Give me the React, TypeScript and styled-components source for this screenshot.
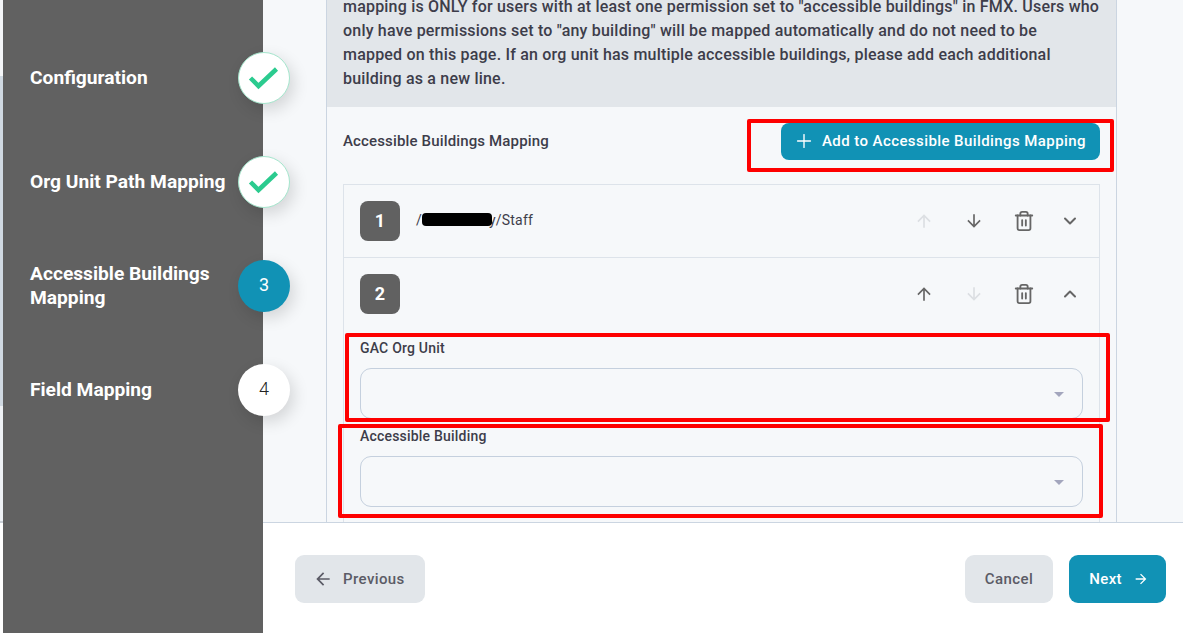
import React, { FC } from 'react';
import styled, { createGlobalStyle } from 'styled-components';
import { ChevronDown, ChevronUp, Plus, Trash2 } from 'lucide-react';

const GlobalStyle = createGlobalStyle`
  html, body {
    margin: 0;
    height: 100%;
    overflow: hidden;
    background: #fff;
    font-family: Roboto, 'Liberation Sans', sans-serif;
  }
  * {
    box-sizing: border-box;
  }
`;

const steps = [
  { label: 'Configuration', status: 'done' },
  { label: 'Org Unit Path Mapping', status: 'done' },
  { label: 'Accessible Buildings Mapping', status: 'active', num: 3 },
  { label: 'Field Mapping', status: 'todo', num: 4 },
];

const arrowPaths = {
  up: 'M4 12l1.41 1.41L11 7.83V20h2V7.83l5.58 5.59L20 12l-8-8-8 8z',
  down: 'M20 12l-1.41-1.41L13 16.17V4h-2v12.17l-5.58-5.59L4 12l8 8 8-8z',
  left: 'M20 11H7.83l5.59-5.59L12 4l-8 8 8 8 1.41-1.41L7.83 13H20v-2z',
  right: 'M12 4l-1.41 1.41L16.17 11H4v2h12.17l-5.58 5.59L12 20l8-8-8-8z',
};

const Arrow: FC<{ dir: keyof typeof arrowPaths; size?: number }> = ({ dir, size = 20 }) => (
  <svg width={size} height={size} viewBox="0 0 24 24" fill="currentColor">
    <path d={arrowPaths[dir]} />
  </svg>
);

const DoneCheck: FC = () => (
  <svg width="32" height="26" viewBox="0 0 32 26" fill="none">
    <polyline points="2.5,13 10.5,21 28.5,4" stroke="#2bcb8f" strokeWidth="4.5" />
  </svg>
);

const App: FC = () => (
  <Page>
    <GlobalStyle />
    <Strip>
      <StripBand $h={76} $color="#f4f6f8" />
      <StripBand $h={330} $color="#d0d9e2" />
      <StripBand $h={115} $color="#eef1f5" />
      <StripBand $h={2} $color="#c9cfd6" />
    </Strip>
    <Sidebar>
      {steps.map((s) => (
        <Step key={s.label}>
          <StepLabel>{s.label}</StepLabel>
          <StepCircle $status={s.status}>{s.status === 'done' ? <DoneCheck /> : s.num}</StepCircle>
        </Step>
      ))}
    </Sidebar>
    <Main>
      <Scroll>
        <Panel>
          <Notice>
            mapping is ONLY for users with at least one permission set to "accessible buildings" in FMX. Users who
            <br />
            only have permissions set to "any building" will be mapped automatically and do not need to be
            <br />
            mapped on this page. If an org unit has multiple accessible buildings, please add each additional
            <br />
            building as a new line.
          </Notice>
          <Body>
            <BodyHeader>
              <Title>Accessible Buildings Mapping</Title>
              <AddButton>
                <Plus size={22} strokeWidth={1.5} />
                Add to Accessible Buildings Mapping
              </AddButton>
            </BodyHeader>
            <Card>
              <Row>
                <Badge>1</Badge>
                <RowName>
                  /<Redacted />y/Staff
                </RowName>
                <RowActions>
                  <IconSlot $muted><Arrow dir="up" /></IconSlot>
                  <IconSlot><Arrow dir="down" /></IconSlot>
                  <IconSlot><Trash2 size={22} strokeWidth={2} /></IconSlot>
                  <ChevronSlot><ChevronDown size={20} strokeWidth={2.4} /></ChevronSlot>
                </RowActions>
              </Row>
              <Row $plain>
                <Badge>2</Badge>
                <RowActions>
                  <IconSlot><Arrow dir="up" /></IconSlot>
                  <IconSlot $muted><Arrow dir="down" /></IconSlot>
                  <IconSlot><Trash2 size={22} strokeWidth={2} /></IconSlot>
                  <ChevronSlot><ChevronUp size={20} strokeWidth={2.4} /></ChevronSlot>
                </RowActions>
              </Row>
              <Fields>
                <Field>
                  <FieldLabel>GAC Org Unit</FieldLabel>
                  <Select><Caret /></Select>
                </Field>
                <Field>
                  <FieldLabel>Accessible Building</FieldLabel>
                  <Select><Caret /></Select>
                </Field>
              </Fields>
            </Card>
          </Body>
        </Panel>
      </Scroll>
      <Footer>
        <PrevButton>
          <Arrow dir="left" />
          Previous
        </PrevButton>
        <FooterRight>
          <GreyButton>Cancel</GreyButton>
          <NextButton>
            Next
            <Arrow dir="right" size={16} />
          </NextButton>
        </FooterRight>
      </Footer>
    </Main>
    <Highlight $x={747} $y={119} $w={367} $h={53} />
    <Highlight $x={345} $y={333} $w={765} $h={89} />
    <Highlight $x={338} $y={424} $w={765} $h={94} />
  </Page>
);

const Page = styled.div`
  position: relative;
  display: flex;
  width: 1183px;
  height: 633px;
  overflow: hidden;
  background: #fff;
`;

const Strip = styled.div`
  flex: 0 0 3px;
  display: flex;
  flex-direction: column;
`;

const StripBand = styled.div<{ $h: number; $color: string }>`
  height: ${({ $h }) => $h}px;
  background: ${({ $color }) => $color};
`;

const Sidebar = styled.aside`
  position: relative;
  z-index: 2;
  flex: 0 0 260px;
  display: flex;
  flex-direction: column;
  gap: 52px;
  padding: 52px 0 0 27px;
  background: #616161;
`;

const Step = styled.div`
  display: flex;
  align-items: center;
  justify-content: space-between;
  height: 52px;
  margin-right: -27px;
`;

const StepLabel = styled.div`
  width: 200px;
  color: #fff;
  font-size: 19.2px;
  font-weight: 700;
  line-height: 24px;
`;

const StepCircle = styled.div<{ $status: string }>`
  flex: 0 0 52px;
  height: 52px;
  display: flex;
  align-items: center;
  justify-content: center;
  border-radius: 50%;
  font-size: 18px;
  font-weight: ${({ $status }) => ($status === 'todo' ? 300 : 400)};
  box-shadow: 4px 6px 16px rgba(0, 0, 0, 0.14);
  background: ${({ $status }) => ($status === 'active' ? '#1192b5' : '#fff')};
  color: ${({ $status }) => ($status === 'active' ? '#fff' : '#222')};
  border: ${({ $status }) => ($status === 'done' ? '1px solid #a5e6cd' : 'none')};
  padding-bottom: ${({ $status }) => ($status === 'done' ? '0' : '4px')};
`;

const Main = styled.main`
  flex: 1;
  min-width: 0;
  display: flex;
  flex-direction: column;
`;

const Scroll = styled.div`
  flex: 0 0 523px;
  display: flex;
  flex-direction: column;
  justify-content: flex-end;
  overflow: hidden;
  padding: 0 66px 0 63px;
  background: #f6f8fa;
  border-bottom: 1px solid #cbd5e1;
`;

const Panel = styled.section`
  border-left: 1px solid #cbd5e1;
  border-right: 1px solid #cbd5e1;
`;

const Notice = styled.div`
  padding: 0 16px 16px;
  background: #e2e6ea;
  color: #3d3d4a;
  font-size: 16px;
  font-weight: 500;
  line-height: 24px;
  letter-spacing: 0.2px;
  white-space: nowrap;
`;

const Body = styled.div`
  padding: 16px 16px 0;
`;

const BodyHeader = styled.div`
  display: flex;
  align-items: center;
  justify-content: space-between;
  margin-bottom: 24px;
`;

const Title = styled.div`
  padding-bottom: 2px;
  color: #3d3d4a;
  font-size: 15px;
  font-weight: 500;
  letter-spacing: 0.01em;
`;

const AddButton = styled.button`
  display: flex;
  align-items: center;
  gap: 7px;
  height: 37px;
  padding: 0 14px 2px 12px;
  border: none;
  border-radius: 8px;
  background: #1192b5;
  color: #fff;
  font-family: inherit;
  font-size: 15px;
  font-weight: 500;
  letter-spacing: 0.42px;
`;

const Card = styled.div`
  border: 1px solid #dde3ea;
  border-bottom: none;
`;

const Row = styled.div<{ $plain?: boolean }>`
  display: flex;
  align-items: center;
  height: ${({ $plain }) => ($plain ? '72px' : '73px')};
  padding: 0 16px;
  border-bottom: ${({ $plain }) => ($plain ? 'none' : '1px solid #dde3ea')};
`;

const Badge = styled.div`
  flex: 0 0 40px;
  height: 40px;
  display: flex;
  align-items: center;
  justify-content: center;
  padding-bottom: 1px;
  border-radius: 8px;
  background: #616161;
  color: #fff;
  font-size: 18px;
  font-weight: 700;
`;

const RowName = styled.div`
  display: flex;
  align-items: center;
  margin: -2px 0 0 16px;
  color: #3d3d4a;
  font-size: 14px;
  letter-spacing: 0.2px;
`;

const Redacted = styled.span`
  position: relative;
  z-index: 1;
  width: 70px;
  height: 13px;
  margin: -2px -3px 0 0;
  border-radius: 4px;
  background: #000;
`;

const RowActions = styled.div`
  display: flex;
  align-items: center;
  margin-left: auto;
`;

const IconSlot = styled.span<{ $muted?: boolean }>`
  width: 50px;
  display: flex;
  justify-content: center;
  color: ${({ $muted }) => ($muted ? '#dcdfe3' : '#666')};
`;

const ChevronSlot = styled.span`
  width: 34px;
  display: flex;
  justify-content: flex-end;
  padding-right: 3px;
  color: #666;
`;

const Fields = styled.div`
  padding: 8px 16px;
`;

const Field = styled.div`
  height: 88px;
`;

const FieldLabel = styled.div`
  height: 20px;
  margin-bottom: 10px;
  color: #3d3d4a;
  font-size: 14px;
  font-weight: 500;
  line-height: 20px;
  letter-spacing: 0.2px;
`;

const Select = styled.div`
  position: relative;
  height: 50.5px;
  border: 1px solid #c5d0de;
  border-radius: 11px;
`;

const Caret = styled.span`
  position: absolute;
  right: 18px;
  top: 23px;
  border-left: 5px solid transparent;
  border-right: 5px solid transparent;
  border-top: 5px solid #a3a6bd;
`;

const Footer = styled.footer`
  flex: 1;
  display: flex;
  align-items: flex-start;
  justify-content: space-between;
  padding: 32px 17px 0 32px;
  background: #fff;
`;

const FooterRight = styled.div`
  display: flex;
  gap: 16px;
`;

const GreyButton = styled.button`
  display: flex;
  align-items: center;
  height: 48px;
  padding: 0 20px;
  border: none;
  border-radius: 9px;
  background: #e2e6ea;
  color: #5b5b66;
  font-family: inherit;
  font-size: 15px;
  font-weight: 500;
  letter-spacing: 0.4px;
`;

const PrevButton = styled(GreyButton)`
  gap: 10px;
  padding-left: 18px;
`;

const NextButton = styled(GreyButton)`
  gap: 11px;
  padding: 0 17px 0 20px;
  background: #1192b5;
  color: #fff;
`;

// review annotations drawn on top of the screenshot
const Highlight = styled.div<{ $x: number; $y: number; $w: number; $h: number }>`
  position: absolute;
  z-index: 3;
  left: ${({ $x }) => $x}px;
  top: ${({ $y }) => $y}px;
  width: ${({ $w }) => $w}px;
  height: ${({ $h }) => $h}px;
  border: 4px solid #fe0000;
  border-radius: 2px;
`;

export default App;
